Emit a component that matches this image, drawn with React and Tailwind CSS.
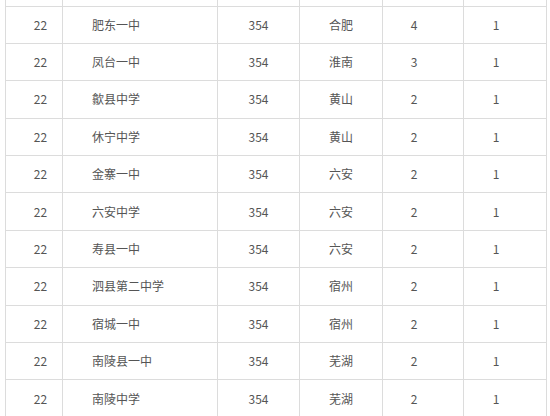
const rows = [
  ['肥东一中', '合肥', '4'],
  ['凤台一中', '淮南', '3'],
  ['歙县中学', '黄山', '2'],
  ['休宁中学', '黄山', '2'],
  ['金寨一中', '六安', '2'],
  ['六安中学', '六安', '2'],
  ['寿县一中', '六安', '2'],
  ['泗县第二中学', '宿州', '2'],
  ['宿城一中', '宿州', '2'],
  ['南陵县一中', '芜湖', '2'],
  ['南陵中学', '芜湖', '2'],
];

const cell = 'border border-[#dcdcdc] p-0';

export default function App() {
  return (
    <div className="w-[550px] h-[416px] overflow-hidden bg-white pl-[5px] font-['Noto_Sans_CJK_SC','Noto_Sans',sans-serif] text-[12px] text-[#555]">
      <table className="table-fixed border-collapse w-[541px]">
        <colgroup>
          <col className="w-[57px]" />
          <col className="w-[155px]" />
          <col className="w-[82px]" />
          <col className="w-[83px]" />
          <col className="w-[81px]" />
          <col className="w-[83px]" />
        </colgroup>
        <tbody>
          {/* tail of the row scrolled above */}
          <tr className="h-[6px]">
            {[0, 1, 2, 3, 4, 5].map((i) => (
              <td key={i} className="border-x border-b border-[#dcdcdc] p-0" />
            ))}
          </tr>
          {rows.map(([name, city, n], i) => (
            <tr key={i} className="h-[37.4px]">
              <td className={`${cell} text-center pl-[13px]`}>22</td>
              <td className={`${cell} text-left pl-[29px]`}>{name}</td>
              <td className={`${cell} text-center`}>354</td>
              <td className={`${cell} text-center`}>{city}</td>
              <td className={`${cell} text-center pr-[18px]`}>{n}</td>
              <td className={`${cell} text-center pr-[18px]`}>1</td>
            </tr>
          ))}
        </tbody>
      </table>
    </div>
  );
}
